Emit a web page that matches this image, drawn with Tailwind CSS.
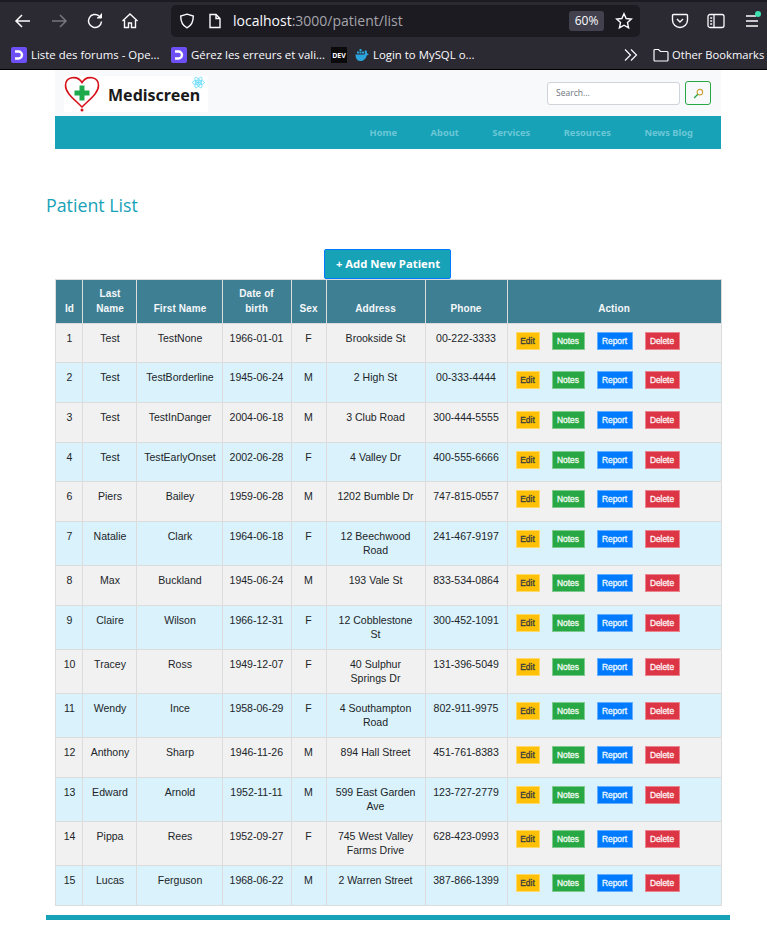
<!DOCTYPE html>
<html lang="en">
<head>
    <meta charset="UTF-8">
    <meta name="viewport" content="width=device-width, initial-scale=1.0">
    <title>Patient List</title>
    <script src="https://cdn.jsdelivr.net/npm/@tailwindcss/browser@4"></script>
</head>
<body class="bg-white font-['Liberation_Sans',sans-serif] overflow-hidden">
    <!-- Browser toolbar -->
    <div class="h-[70px] bg-[#2b2a33] border-t-2 border-[#1c1b22] border-b border-b-black font-['Open_Sans',sans-serif] text-[#fbfbfe]">
        <div class="flex items-center h-[37px] pl-[14px]">
            <svg class="w-[18px] h-[18px]" viewBox="0 0 18 18" fill="none" stroke="#fbfbfe" stroke-width="1.5"><path d="M2 9h14M8 3 2 9l6 6"/></svg>
            <svg class="w-[18px] h-[18px] ml-[18px]" viewBox="0 0 18 18" fill="none" stroke="#77767f" stroke-width="1.5"><path d="M2 9h14M10 3l6 6-6 6"/></svg>
            <svg class="w-[18px] h-[18px] ml-[18px]" viewBox="0 0 18 18" fill="none" stroke="#fbfbfe" stroke-width="1.5"><path d="M15.500 9.500A6.500 6.500 0 1 1 13 3.800"/><path d="M15.500 1.500v4.500H11" fill="#fbfbfe" stroke-width="1"/></svg>
            <svg class="w-[18px] h-[18px] ml-[17px]" viewBox="0 0 18 18" fill="none" stroke="#fbfbfe" stroke-width="1.4"><path d="M1.500 9 9 2l7.500 7M3.500 8v7.500h4V11h3v4.500h4V8"/></svg>
            <div class="flex items-center w-[469px] h-[32px] ml-[32px] pl-[8px] bg-[#1c1b22] rounded-[5px]">
                <svg class="w-[16px] h-[16px]" viewBox="0 0 16 16" fill="none" stroke="#fbfbfe" stroke-width="1.4"><path d="M8 1.200 14.300 3c0 6-1.700 9.600-6.300 11.800C3.400 12.600 1.700 9 1.700 3z"/></svg>
                <svg class="w-[14px] h-[16px] ml-[13px]" viewBox="0 0 14 16" fill="none" stroke="#fbfbfe" stroke-width="1.4"><path d="M2 1.500h6l4 4v9H2zM8 1.500v4h4"/></svg>
                <span class="ml-[11px] text-[14px] leading-none whitespace-nowrap">localhost<span class="text-[#a5a4ab]">:3000/patient/list</span></span>
                <span class="ml-auto w-[35px] h-[20px] flex items-center justify-center bg-[#42414d] rounded-[3px] text-[12px]">60%</span>
                <svg class="w-[18px] h-[18px] ml-[11px] mr-[7px]" viewBox="0 0 18 18" fill="none" stroke="#fbfbfe" stroke-width="1.4"><path d="m9 1.700 2.200 4.800 5.200.6-3.900 3.500 1.100 5.200L9 13.200l-4.600 2.600 1.100-5.200L1.600 7.100l5.200-.6z"/></svg>
            </div>
            <svg class="w-[18px] h-[18px] ml-[31px]" viewBox="0 0 18 18" fill="none" stroke="#fbfbfe" stroke-width="1.4"><path d="M2.500 2.500h13a1 1 0 0 1 1 1V8a7.500 7.500 0 0 1-15 0V3.500a1 1 0 0 1 1-1z"/><path d="m6 7 3 3 3-3"/></svg>
            <svg class="w-[18px] h-[16px] ml-[18px]" viewBox="0 0 18 16" fill="none" stroke="#fbfbfe" stroke-width="1.3"><rect x="1" y="1.500" width="16" height="13" rx="2"/><path d="M7 1.500v13M3.200 5h2M3.200 8h2M3.200 11h2"/></svg>
            <div class="relative ml-[18px]">
                <svg class="w-[18px] h-[18px]" viewBox="0 0 18 18" fill="none" stroke="#fbfbfe" stroke-width="1.4"><path d="M3 4h10M3 9h12M3 14h12"/></svg>
                <span class="absolute -top-[1px] right-0 w-[6px] h-[6px] rounded-full bg-[#3fe1b0]"></span>
            </div>
        </div>
        <div class="flex items-center h-[30px] pt-[2px] pl-[11px] text-[11.400px] whitespace-nowrap">
            <span class="w-[16px] h-[16px] rounded-[2px] bg-[#6e4ff5] flex items-center justify-center">
                <svg class="w-[12px] h-[12px]" viewBox="0 0 12 12" fill="none" stroke="#fff" stroke-width="2.400"><path d="M2 2.500h3.500a3.500 3.500 0 0 1 0 7H2"/></svg>
            </span>
            <span class="ml-[4px] w-[140px]">Liste des forums - Ope...</span>
            <span class="w-[16px] h-[16px] rounded-[2px] bg-[#6e4ff5] flex items-center justify-center">
                <svg class="w-[12px] h-[12px]" viewBox="0 0 12 12" fill="none" stroke="#fff" stroke-width="2.400"><path d="M2 2.500h3.500a3.500 3.500 0 0 1 0 7H2"/></svg>
            </span>
            <span class="ml-[4px] w-[140px]">Gérez les erreurs et vali...</span>
            <span class="w-[16px] h-[16px] bg-[#0a0a0a] flex items-center justify-center text-[7px] font-bold leading-none">DEV</span>
            <svg class="w-[14px] h-[14px] ml-[8px]" viewBox="0 0 14 14"><path d="M.5 6.500h9.200V2.500h2l.3 3.200c.7-.2 1.300 0 1.700.4-.4 1-1.200 1.400-2 1.400C11 11 8.500 13 5 13 2 13 .5 10 .5 6.500z" fill="#2ba3dc"/><path d="M2 3.500h2v2H2zM4.500 3.500h2v2h-2zM7 3.500h2v2H7zM4.500 1h2v2h-2z" fill="#2ba3dc"/></svg>
            <span class="ml-[4px] w-[251px]">Login to MySQL o...</span>
            <svg class="w-[14px] h-[14px]" viewBox="0 0 14 14" fill="none" stroke="#fbfbfe" stroke-width="1.200"><path d="m1 1.500 5.500 5.500L1 12.500M7 1.500l5.500 5.500L7 12.500"/></svg>
            <svg class="w-[16px] h-[14px] ml-[15px]" viewBox="0 0 16 14" fill="none" stroke="#fbfbfe" stroke-width="1.200"><path d="M1 2.500a1 1 0 0 1 1-1h3.500l2 2H14a1 1 0 0 1 1 1v7.500a1 1 0 0 1-1 1H2a1 1 0 0 1-1-1z"/></svg>
            <span class="ml-[3px] text-[11.200px]">Other Bookmarks</span>
        </div>
    </div>

    <!-- Site navbar -->
    <header class="w-[666px] ml-[55px]">
        <div class="flex items-center h-[46px] pl-[9px] pr-[10px] bg-[#f8f9fa]">
            <div class="flex items-center w-[144px] h-[36px] mt-[1px] bg-white relative">
                <svg class="w-[36px] h-[36px]" viewBox="0 0 36 36" fill="none">
                    <path d="M18 31 C10 23 1.500 17 1.500 9.500 C1.500 1 13 -1.500 18 6.500 C23 -1.500 34.500 1 34.500 9.500 C34.500 17 26 23 18 31z" stroke="#d6111a" stroke-width="1.600"/>
                    <path d="M15.500 9.500h5v5h5v5h-5v5h-5v-5h-5v-5h5z" fill="#1ea94a"/>
                    <circle cx="18" cy="34" r="1.500" fill="#d6111a"/>
                </svg>
                <span class="ml-[8px] mt-[3px] font-['Noto_Sans',sans-serif] font-bold text-[16px] leading-none text-[#1a1a1a]">Mediscreen</span>
                <svg class="absolute right-[3px] top-0 w-[13px] h-[13px]" viewBox="0 0 24 24" fill="none" stroke="#61dafb" stroke-width="1.500">
                    <circle cx="12" cy="12" r="2" fill="#61dafb"/>
                    <ellipse cx="12" cy="12" rx="11" ry="4.200"/>
                    <ellipse cx="12" cy="12" rx="11" ry="4.200" transform="rotate(60 12 12)"/>
                    <ellipse cx="12" cy="12" rx="11" ry="4.200" transform="rotate(120 12 12)"/>
                </svg>
            </div>
            <div class="ml-auto flex items-center gap-[5px]">
                <div class="flex items-center w-[133px] h-[23px] pl-[8px] bg-white border border-[#ced4da] rounded-[3px] font-['Open_Sans',sans-serif] text-[8.500px] text-[#6c757d]">Search...</div>
                <div class="flex items-center justify-center w-[26px] h-[24px] border border-[#28a745] rounded-[3px]">
                    <svg class="w-[11px] h-[11px]" viewBox="0 0 12 12" fill="none"><circle cx="7.500" cy="4.500" r="3" stroke="#c9a33a" stroke-width="1.200"/><path d="M5.300 6.700 1.200 10.800" stroke="#28a745" stroke-width="1.500"/></svg>
                </div>
            </div>
        </div>
        <nav class="flex items-center justify-end gap-[33.500px] h-[33px] pr-[28px] bg-[#17a2b8] font-['Noto_Sans',sans-serif] font-bold text-[9.300px] text-[#6cc8d6]">
            <a>Home</a><a>About</a><a>Services</a><a>Resources</a><a>News Blog</a>
        </nav>
    </header>

    <main class="w-[684px] ml-[46px]">
        <h1 class="mt-[43px] font-['Open_Sans',sans-serif] text-[17.800px] leading-[27px] text-[#17a2b8]">Patient List</h1>
        <div class="flex justify-center mt-[30px]">
            <button class="w-[127px] h-[30px] mr-[2px] pl-[2px] bg-[#17a2b8] border border-[#007bff] rounded-[2px] font-['Open_Sans',sans-serif] font-bold text-[11.300px] text-white">+ Add New Patient</button>
        </div>
        <table class="table-fixed w-[666px] mx-auto border-collapse text-[10.560px] leading-[14.400px] text-[#212529] text-center [&_td]:border [&_td]:border-[#dcdcdc] [&_td]:px-[2px] [&_td:nth-child(-n+3)]:pl-[4px] [&_td:nth-child(6)]:px-[8px] [&_td:nth-child(8)]:px-[8px] [&_td]:pt-[7px] [&_td]:align-top [&_th]:border [&_th]:border-[#dcdcdc] [&_th]:px-[6px] [&_th:nth-child(-n+3)]:pl-[8px] [&_th:nth-child(-n+3)]:pr-[6px] [&_th:first-child]:px-0 [&_th]:pb-[7px] [&_th]:align-bottom [&_td>div]:flex [&_td>div]:gap-[12px] [&_td>div]:mt-[1px] [&_td>div]:text-[8.400px] [&_td>div]:leading-none [&_a]:h-[18px] [&_a]:flex [&_a]:items-center [&_a]:justify-center [&_a]:border [&_a]:border-white/40 [&_a]:[-webkit-text-stroke:0.3px]">
            <colgroup>
                <col class="w-[27px]"><col class="w-[54px]"><col class="w-[86px]"><col class="w-[69px]"><col class="w-[35px]"><col class="w-[99px]"><col class="w-[82px]"><col class="w-[214px]">
            </colgroup>
            <thead class="bg-[#3f7f93] text-[#f4f8fa] text-[10px] font-bold tracking-[0.1px]">
                <tr class="h-[44px]"><th>Id</th><th>Last Name</th><th>First Name</th><th>Date of birth</th><th>Sex</th><th>Address</th><th>Phone</th><th>Action</th></tr>
            </thead>
            <tbody class="[&>tr:nth-child(odd)]:bg-[#f1f1f1] [&>tr:nth-child(even)]:bg-[#d9f2fb]">
                <tr class="h-[39px]"><td>1</td><td>Test</td><td>TestNone</td><td>1966-01-01</td><td>F</td><td>Brookside St</td><td>00-222-3333</td><td><div><a class="w-[24px] bg-[#ffc107] text-[#343a40]">Edit</a><a class="w-[33px] bg-[#28a745] text-white/90">Notes</a><a class="w-[36px] bg-[#007bff] text-white/90">Report</a><a class="w-[35px] bg-[#dc3545] text-white/90">Delete</a></div></td></tr>
                <tr class="h-[40px]"><td>2</td><td>Test</td><td>TestBorderline</td><td>1945-06-24</td><td>M</td><td>2 High St</td><td>00-333-4444</td><td><div><a class="w-[24px] bg-[#ffc107] text-[#343a40]">Edit</a><a class="w-[33px] bg-[#28a745] text-white/90">Notes</a><a class="w-[36px] bg-[#007bff] text-white/90">Report</a><a class="w-[35px] bg-[#dc3545] text-white/90">Delete</a></div></td></tr>
                <tr class="h-[40px]"><td>3</td><td>Test</td><td>TestInDanger</td><td>2004-06-18</td><td>M</td><td>3 Club Road</td><td>300-444-5555</td><td><div><a class="w-[24px] bg-[#ffc107] text-[#343a40]">Edit</a><a class="w-[33px] bg-[#28a745] text-white/90">Notes</a><a class="w-[36px] bg-[#007bff] text-white/90">Report</a><a class="w-[35px] bg-[#dc3545] text-white/90">Delete</a></div></td></tr>
                <tr class="h-[39px]"><td>4</td><td>Test</td><td>TestEarlyOnset</td><td>2002-06-28</td><td>F</td><td>4 Valley Dr</td><td>400-555-6666</td><td><div><a class="w-[24px] bg-[#ffc107] text-[#343a40]">Edit</a><a class="w-[33px] bg-[#28a745] text-white/90">Notes</a><a class="w-[36px] bg-[#007bff] text-white/90">Report</a><a class="w-[35px] bg-[#dc3545] text-white/90">Delete</a></div></td></tr>
                <tr class="h-[40px]"><td>6</td><td>Piers</td><td>Bailey</td><td>1959-06-28</td><td>M</td><td>1202 Bumble Dr</td><td>747-815-0557</td><td><div><a class="w-[24px] bg-[#ffc107] text-[#343a40]">Edit</a><a class="w-[33px] bg-[#28a745] text-white/90">Notes</a><a class="w-[36px] bg-[#007bff] text-white/90">Report</a><a class="w-[35px] bg-[#dc3545] text-white/90">Delete</a></div></td></tr>
                <tr class="h-[44px]"><td>7</td><td>Natalie</td><td>Clark</td><td>1964-06-18</td><td>F</td><td>12 Beechwood Road</td><td>241-467-9197</td><td><div><a class="w-[24px] bg-[#ffc107] text-[#343a40]">Edit</a><a class="w-[33px] bg-[#28a745] text-white/90">Notes</a><a class="w-[36px] bg-[#007bff] text-white/90">Report</a><a class="w-[35px] bg-[#dc3545] text-white/90">Delete</a></div></td></tr>
                <tr class="h-[40px]"><td>8</td><td>Max</td><td>Buckland</td><td>1945-06-24</td><td>M</td><td>193 Vale St</td><td>833-534-0864</td><td><div><a class="w-[24px] bg-[#ffc107] text-[#343a40]">Edit</a><a class="w-[33px] bg-[#28a745] text-white/90">Notes</a><a class="w-[36px] bg-[#007bff] text-white/90">Report</a><a class="w-[35px] bg-[#dc3545] text-white/90">Delete</a></div></td></tr>
                <tr class="h-[44px]"><td>9</td><td>Claire</td><td>Wilson</td><td>1966-12-31</td><td>F</td><td>12 Cobblestone St</td><td>300-452-1091</td><td><div><a class="w-[24px] bg-[#ffc107] text-[#343a40]">Edit</a><a class="w-[33px] bg-[#28a745] text-white/90">Notes</a><a class="w-[36px] bg-[#007bff] text-white/90">Report</a><a class="w-[35px] bg-[#dc3545] text-white/90">Delete</a></div></td></tr>
                <tr class="h-[44px]"><td>10</td><td>Tracey</td><td>Ross</td><td>1949-12-07</td><td>F</td><td>40 Sulphur Springs Dr</td><td>131-396-5049</td><td><div><a class="w-[24px] bg-[#ffc107] text-[#343a40]">Edit</a><a class="w-[33px] bg-[#28a745] text-white/90">Notes</a><a class="w-[36px] bg-[#007bff] text-white/90">Report</a><a class="w-[35px] bg-[#dc3545] text-white/90">Delete</a></div></td></tr>
                <tr class="h-[44px]"><td>11</td><td>Wendy</td><td>Ince</td><td>1958-06-29</td><td>F</td><td>4 Southampton Road</td><td>802-911-9975</td><td><div><a class="w-[24px] bg-[#ffc107] text-[#343a40]">Edit</a><a class="w-[33px] bg-[#28a745] text-white/90">Notes</a><a class="w-[36px] bg-[#007bff] text-white/90">Report</a><a class="w-[35px] bg-[#dc3545] text-white/90">Delete</a></div></td></tr>
                <tr class="h-[40px]"><td>12</td><td>Anthony</td><td>Sharp</td><td>1946-11-26</td><td>M</td><td>894 Hall Street</td><td>451-761-8383</td><td><div><a class="w-[24px] bg-[#ffc107] text-[#343a40]">Edit</a><a class="w-[33px] bg-[#28a745] text-white/90">Notes</a><a class="w-[36px] bg-[#007bff] text-white/90">Report</a><a class="w-[35px] bg-[#dc3545] text-white/90">Delete</a></div></td></tr>
                <tr class="h-[44px]"><td>13</td><td>Edward</td><td>Arnold</td><td>1952-11-11</td><td>M</td><td>599 East Garden Ave</td><td>123-727-2779</td><td><div><a class="w-[24px] bg-[#ffc107] text-[#343a40]">Edit</a><a class="w-[33px] bg-[#28a745] text-white/90">Notes</a><a class="w-[36px] bg-[#007bff] text-white/90">Report</a><a class="w-[35px] bg-[#dc3545] text-white/90">Delete</a></div></td></tr>
                <tr class="h-[44px]"><td>14</td><td>Pippa</td><td>Rees</td><td>1952-09-27</td><td>F</td><td>745 West Valley Farms Drive</td><td>628-423-0993</td><td><div><a class="w-[24px] bg-[#ffc107] text-[#343a40]">Edit</a><a class="w-[33px] bg-[#28a745] text-white/90">Notes</a><a class="w-[36px] bg-[#007bff] text-white/90">Report</a><a class="w-[35px] bg-[#dc3545] text-white/90">Delete</a></div></td></tr>
                <tr class="h-[40px]"><td>15</td><td>Lucas</td><td>Ferguson</td><td>1968-06-22</td><td>M</td><td>2 Warren Street</td><td>387-866-1399</td><td><div><a class="w-[24px] bg-[#ffc107] text-[#343a40]">Edit</a><a class="w-[33px] bg-[#28a745] text-white/90">Notes</a><a class="w-[36px] bg-[#007bff] text-white/90">Report</a><a class="w-[35px] bg-[#dc3545] text-white/90">Delete</a></div></td></tr>
            </tbody>
        </table>
        <div class="h-[5px] mt-[9px] bg-[#17a2b8]"></div>
    </main>
</body>
</html>
